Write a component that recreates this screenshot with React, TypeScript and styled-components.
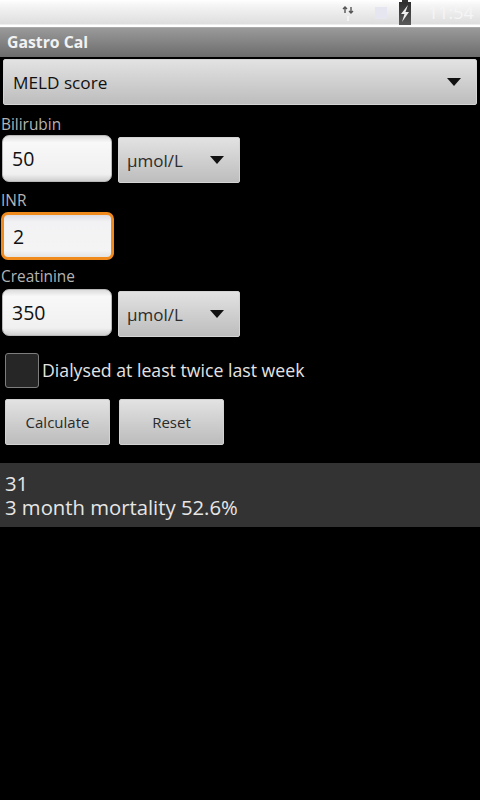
import React from "react";
import styled, { createGlobalStyle } from "styled-components";

const Global = createGlobalStyle`
  html, body { margin: 0; padding: 0; background: #000; }
  body { font-family: "Open Sans", "Noto Sans", sans-serif; }
`;

const Screen = styled.div`
  width: 480px;
  height: 800px;
  background: #000;
  overflow: hidden;
  display: flex;
  flex-direction: column;
`;

const StatusBar = styled.div`
  height: 25px;
  padding-bottom: 3px;
  box-sizing: content-box;
  background: linear-gradient(#fff 0, #f4f4f4 6px, #dedede 24px, #fff 25px, #fff 27px, #555 28px);
  display: flex;
  align-items: center;
  justify-content: flex-end;
`;

const Clock = styled.span`
  font-size: 18px;
  color: #f5f5f5;
  width: 44px;
  margin-left: 17px;
  margin-right: 8px;
  line-height: 25px;
  white-space: nowrap;
`;

const TitleBar = styled.div`
  height: 29px;
  background: linear-gradient(#9a9a9a, #6c6c6c);
  color: #f2f2f2;
  font-weight: 700;
  font-size: 15.8px;
  line-height: 28px;
  padding-left: 7px;
  flex: none;
`;

const Content = styled.div`
  display: flex;
  flex-direction: column;
  padding-top: 2px;
`;

const Arrow = styled.span`
  width: 0;
  height: 0;
  border-left: 7px solid transparent;
  border-right: 7px solid transparent;
  border-top: 8px solid #111;
  flex: none;
`;

const Spinner = styled.div<{ $full?: boolean }>`
  box-sizing: border-box;
  display: flex;
  align-items: center;
  justify-content: space-between;
  background: linear-gradient(#e2e2e2, #bdbdbd);
  border: 1px solid #d4d4d4;
  border-radius: 2px;
  color: ${(p) => (p.$full ? "#111" : "#2c2c2c")};
  height: 46px;
  width: ${(p) => (p.$full ? "474px" : "122px")};
  margin: ${(p) => (p.$full ? "0 0 0 3px" : "2px 0 0 6px")};
  padding: ${(p) => (p.$full ? "0 15px 0 9px" : "0 15px 0 8px")};
  font-size: ${(p) => (p.$full ? "17.2px" : "17px")};
`;

const FieldLabel = styled.div<{ $top: number }>`
  color: #b4b4b4;
  font-size: 15.4px;
  line-height: 22px;
  padding-left: 1px;
  height: 20px;
  margin-top: ${(p) => p.$top}px;
`;

const Row = styled.div<{ $top: number }>`
  display: flex;
  align-items: flex-start;
  height: 47px;
  margin-top: ${(p) => p.$top}px;
  padding-left: 2px;
`;

const TextField = styled.div<{ $focused?: boolean }>`
  box-sizing: border-box;
  width: ${(p) => (p.$focused ? "113px" : "110px")};
  height: ${(p) => (p.$focused ? "48px" : "47px")};
  margin-left: ${(p) => (p.$focused ? "-1px" : "0")};
  border-radius: 7px;
  background: ${(p) =>
    p.$focused
      ? "linear-gradient(#dcdce2, #f2f2f4 16%, #f4f4f4 85%, #e4e4e4)"
      : "linear-gradient(#dcdcdc, #f8f8f8 14%, #f0f0f0 85%, #cfcfcf)"};
  border: ${(p) => (p.$focused ? "3px solid #f08a1d" : "1px solid #b8b8b8")};
  color: #111;
  font-size: 19.5px;
  display: flex;
  align-items: center;
  padding-left: 9px;
`;

const CheckRow = styled.div`
  display: flex;
  align-items: center;
  margin-top: 17px;
  padding-left: 5px;
  height: 35px;
  gap: 3px;
`;

const CheckBox = styled.div`
  box-sizing: border-box;
  width: 34px;
  height: 35px;
  border: 1px solid #7d7d7d;
  border-radius: 3px;
  background: #262626;
`;

const CheckText = styled.span`
  color: #e4e4e4;
  font-size: 17.7px;
  padding-bottom: 2px;
`;

const Buttons = styled.div`
  display: flex;
  gap: 9px;
  padding-left: 5px;
  margin-top: 11px;
`;

const Button = styled.div`
  box-sizing: border-box;
  width: 105px;
  height: 46px;
  border-radius: 2px;
  background: linear-gradient(#e2e2e2, #bcbcbc);
  border: 1px solid #d2d2d2;
  color: #2a2a2a;
  font-size: 15px;
  display: flex;
  align-items: center;
  justify-content: center;
`;

const Result = styled.div`
  margin-top: 18px;
  height: 64px;
  box-sizing: border-box;
  background: #333;
  color: #e6e6e6;
  font-size: 20.3px;
  line-height: 25px;
  padding: 8px 0 0 5px;
`;

const ResultLine = styled.div`
  height: 24px;
`;

const TransferIcon = styled.svg`
  width: 14px;
  height: 18px;
  margin-right: 20px;
`;

const SignalIcon = styled.svg`
  width: 12px;
  height: 12px;
  margin-right: 12px;
`;

const BatteryIcon = styled.svg`
  width: 12px;
  height: 26px;
  margin-top: -1px;
`;

export default function App() {
  return (
    <Screen>
      <Global />
      <StatusBar>
        <TransferIcon viewBox="0 0 14 18">
          <path d="M4 3v6M2 5l2-2 2 2" stroke="#555" strokeWidth="1.4" fill="none" />
          <path d="M10 3v6M8 7l2 2 2-2" stroke="#555" strokeWidth="1.4" fill="none" />
          <path d="M7 12v5" stroke="#f2f2f2" strokeWidth="2" />
        </TransferIcon>
        <SignalIcon viewBox="0 0 12 12">
          <rect width="12" height="12" fill="#e6e6f0" />
        </SignalIcon>
        <BatteryIcon viewBox="0 0 12 26">
          <defs>
            <linearGradient id="bat" x1="0" y1="0" x2="0" y2="1">
              <stop offset="0" stopColor="#2e2e2e" />
              <stop offset="1" stopColor="#5a5a5a" />
            </linearGradient>
          </defs>
          <rect x="3" y="0" width="6" height="4" fill="#333" />
          <rect x="0" y="3" width="12" height="23" fill="url(#bat)" />
          <path d="M9 6 2 15h3.5L3 23l7-10H6.5z" fill="#eee" />
        </BatteryIcon>
        <Clock>11:54</Clock>
      </StatusBar>
      <TitleBar>Gastro Cal</TitleBar>
      <Content>
        <Spinner $full>
          MELD score
          <Arrow />
        </Spinner>
        <FieldLabel $top={9}>Bilirubin</FieldLabel>
        <Row $top={1}>
          <TextField>50</TextField>
          <Spinner>
            µmol/L
            <Arrow />
          </Spinner>
        </Row>
        <FieldLabel $top={8}>INR</FieldLabel>
        <Row $top={2}>
          <TextField $focused>2</TextField>
        </Row>
        <FieldLabel $top={7}>Creatinine</FieldLabel>
        <Row $top={3}>
          <TextField>350</TextField>
          <Spinner>
            µmol/L
            <Arrow />
          </Spinner>
        </Row>
        <CheckRow>
          <CheckBox />
          <CheckText>Dialysed at least twice last week</CheckText>
        </CheckRow>
        <Buttons>
          <Button>Calculate</Button>
          <Button>Reset</Button>
        </Buttons>
        <Result>
          <ResultLine>31</ResultLine>
          <ResultLine>3 month mortality 52.6%</ResultLine>
        </Result>
      </Content>
    </Screen>
  );
}
